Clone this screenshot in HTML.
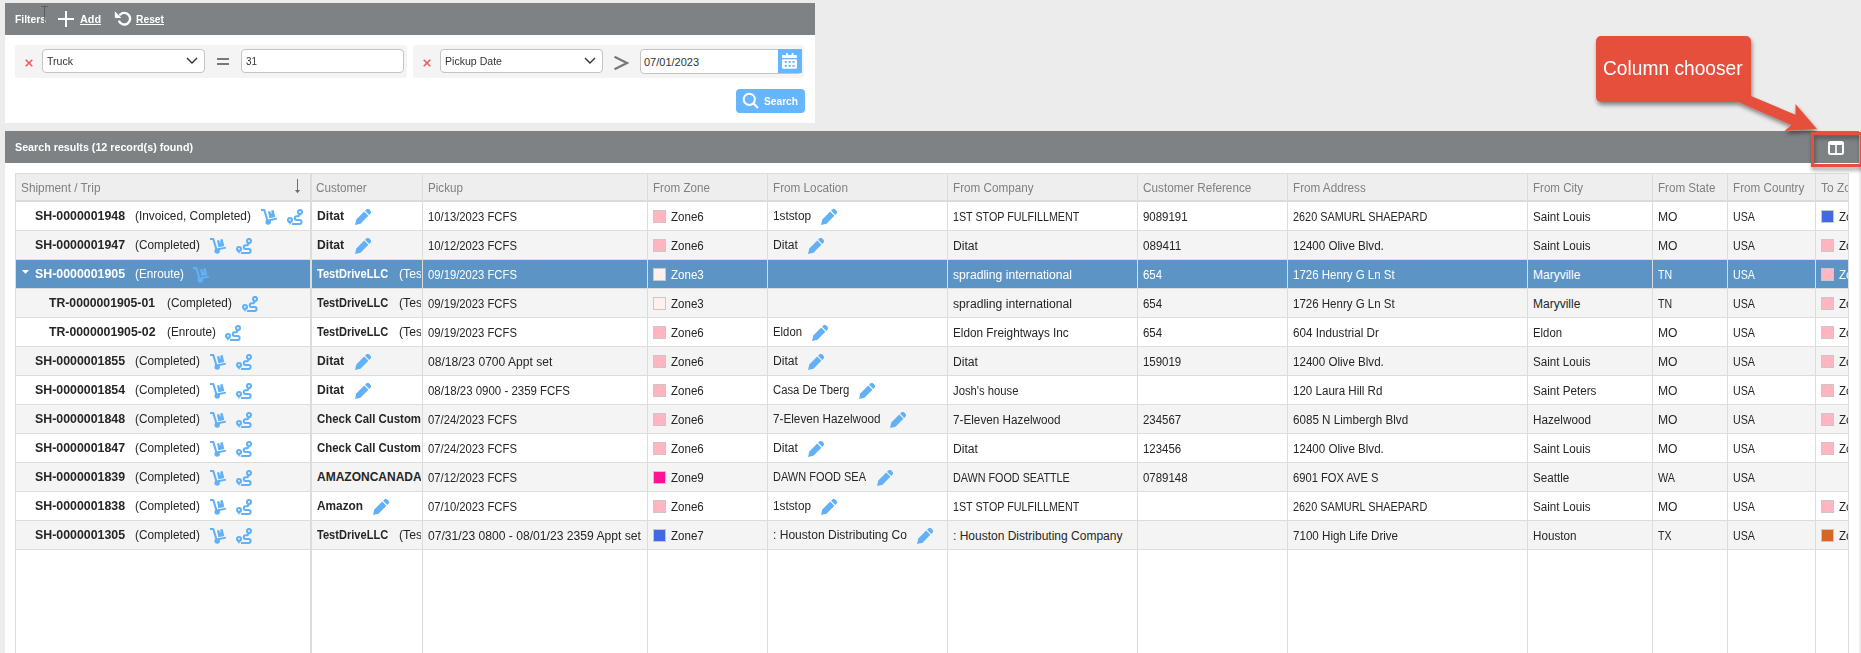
<!DOCTYPE html><html><head><meta charset="utf-8"><style>
*{box-sizing:border-box;margin:0;padding:0}
html,body{width:1861px;height:653px;overflow:hidden;background:#ececec;font-family:"Liberation Sans",sans-serif;position:relative}
.a{position:absolute}
svg{display:block}
.t{position:absolute;white-space:nowrap;font-size:12px;line-height:14px;color:#333;transform-origin:0 0}
.sw{position:absolute;width:13px;height:13px;border:1px solid #c8c8c8}
.cell{position:absolute;overflow:hidden;height:28px}
</style></head><body>

<div class="a" style="left:5px;top:3px;width:810px;height:120px;background:#fff"></div>
<div class="a" style="left:5px;top:3px;width:810px;height:32px;background:#7e8285"></div>
<div class="t" style="left:15px;top:12px;color:#fff;font-weight:bold;font-size:11px;transform:scaleX(0.9391);">Filters</div>
<div class="a" style="left:44px;top:6px;width:1px;height:17px;background:#4a4a4a;opacity:.7"></div><div class="a" style="left:41px;top:6px;width:7px;height:1px;background:#4a4a4a;opacity:.6"></div>
<div class="a" style="left:58px;top:18px;width:16px;height:2px;background:#fff"></div><div class="a" style="left:65px;top:11px;width:2px;height:16px;background:#fff"></div>
<div class="t" style="left:80px;top:12px;color:#fff;font-weight:bold;font-size:11px;transform:scaleX(0.9821);text-decoration:underline">Add</div>
<svg class="a" style="left:114px;top:10px" width="18" height="18" viewBox="0 0 18 18"><path d="M6.2 4.6 A5.8 5.8 0 1 1 5.3 11.6" fill="none" stroke="#fff" stroke-width="2.4" stroke-linecap="round"/><path d="M0.8 1.2 L0.8 8 L7.4 8 Z" fill="#fff"/></svg>
<div class="t" style="left:136px;top:12px;color:#fff;font-weight:bold;font-size:11px;transform:scaleX(0.9346);text-decoration:underline">Reset</div>
<div class="a" style="left:15px;top:45px;width:392px;height:33px;background:#f4f4f4;border-radius:3px"></div>
<div class="a" style="left:413px;top:45px;width:391px;height:33px;background:#f4f4f4;border-radius:3px"></div>
<div class="a" style="left:25px;top:59px"><svg width="8" height="8" viewBox="0 0 8 8"><path d="M0.7 0.7 L7.3 7.3 M7.3 0.7 L0.7 7.3" stroke="#f25a5a" stroke-width="1.6"/></svg></div>
<div class="a" style="left:423px;top:59px"><svg width="8" height="8" viewBox="0 0 8 8"><path d="M0.7 0.7 L7.3 7.3 M7.3 0.7 L0.7 7.3" stroke="#f25a5a" stroke-width="1.6"/></svg></div>
<div class="a" style="left:42px;top:49px;width:163px;height:24px;background:#fff;border:1px solid #c4c4c4;border-radius:4px"></div>
<div class="t" style="left:47px;top:54px;color:#333;font-size:11px;transform:scaleX(0.9597);">Truck</div>
<div class="a" style="left:186px;top:57px"><svg width="12" height="8" viewBox="0 0 12 8"><path d="M1 1 L6 6 L11 1" fill="none" stroke="#333" stroke-width="1.4"/></svg></div>
<div class="a" style="left:217px;top:58px;width:12px;height:2px;background:#777"></div><div class="a" style="left:217px;top:63px;width:12px;height:2px;background:#777"></div>
<div class="a" style="left:241px;top:49px;width:163px;height:24px;background:#fff;border:1px solid #c4c4c4;border-radius:4px"></div>
<div class="t" style="left:246px;top:54px;color:#333;font-size:11px;transform:scaleX(0.8990);">31</div>
<div class="a" style="left:440px;top:49px;width:163px;height:24px;background:#fff;border:1px solid #c4c4c4;border-radius:4px"></div>
<div class="t" style="left:445px;top:54px;color:#333;font-size:11px;transform:scaleX(0.9611);">Pickup Date</div>
<div class="a" style="left:584px;top:57px"><svg width="12" height="8" viewBox="0 0 12 8"><path d="M1 1 L6 6 L11 1" fill="none" stroke="#333" stroke-width="1.4"/></svg></div>
<svg class="a" style="left:613px;top:55px" width="16" height="16" viewBox="0 0 16 16"><path d="M1.5 1.8 L14 8 L1.5 14.2" fill="none" stroke="#777" stroke-width="2.2"/></svg>
<div class="a" style="left:640px;top:49px;width:162px;height:25px;background:#fff;border:1px solid #c4c4c4;border-radius:4px"></div>
<div class="t" style="left:644px;top:55px;color:#333;font-size:11px;">07/01/2023</div>
<div class="a" style="left:778px;top:49px;width:24px;height:24px;background:#66b5ff"></div>
<svg class="a" style="left:782px;top:53px" width="16" height="16" viewBox="0 0 16 16"><rect x="0" y="2" width="15" height="3" rx="1" fill="#fff"/><rect x="0" y="6.2" width="15" height="9.6" rx="1.2" fill="#fff"/><rect x="4" y="0" width="2" height="3.5" rx="1" fill="#fff"/><rect x="9.6" y="0" width="2" height="3.5" rx="1" fill="#fff"/><g fill="#66b5ff"><rect x="2.7" y="8" width="2.1" height="1.9"/><rect x="6.6" y="8" width="2.1" height="1.9"/><rect x="10.5" y="8" width="2.1" height="1.9"/><rect x="2.7" y="11.9" width="2.1" height="1.9"/><rect x="6.6" y="11.9" width="2.1" height="1.9"/><rect x="10.5" y="11.9" width="2.1" height="1.9"/></g></svg>
<div class="a" style="left:736px;top:89px;width:69px;height:24px;background:#66b5ff;border-radius:4px"></div>
<svg class="a" style="left:742px;top:92px" width="18" height="18" viewBox="0 0 18 18"><circle cx="7.3" cy="7.3" r="5.6" fill="none" stroke="#fff" stroke-width="2"/><path d="M11.3 11.3 L16 16" stroke="#fff" stroke-width="2.2"/></svg>
<div class="t" style="left:764px;top:94px;color:#fff;font-weight:bold;font-size:11px;transform:scaleX(0.9267);">Search</div>
<div class="a" style="left:5px;top:131px;width:1854px;height:530px;background:#fff"></div>
<div class="a" style="left:5px;top:131px;width:1854px;height:32px;background:#7e8285"></div>
<div class="t" style="left:15px;top:140px;color:#fff;font-weight:bold;font-size:11px;transform:scaleX(0.9739);">Search results (12 record(s) found)</div>
<div class="a" style="left:15px;top:173px;width:1834px;height:487px;border:1px solid #dcdcdc;background:#fff;overflow:hidden">
<div class="a" style="left:0;top:0;width:2000px;height:26px;background:#eeeeee"></div>
<div class="a" style="left:0;top:26px;width:2000px;height:2px;background:#dcdcdc"></div>
<div class="a" style="left:0;top:28px;width:2000px;height:28px;background:#ffffff"></div>
<div class="a" style="left:0;top:56px;width:2000px;height:1px;background:#dcdcdc"></div>
<div class="a" style="left:0;top:57px;width:2000px;height:28px;background:#f4f4f4"></div>
<div class="a" style="left:0;top:85px;width:2000px;height:1px;background:#dcdcdc"></div>
<div class="a" style="left:0;top:86px;width:2000px;height:28px;background:#5d94c6"></div>
<div class="a" style="left:0;top:114px;width:2000px;height:1px;background:#dcdcdc"></div>
<div class="a" style="left:0;top:115px;width:2000px;height:28px;background:#f4f4f4"></div>
<div class="a" style="left:0;top:143px;width:2000px;height:1px;background:#dcdcdc"></div>
<div class="a" style="left:0;top:144px;width:2000px;height:28px;background:#ffffff"></div>
<div class="a" style="left:0;top:172px;width:2000px;height:1px;background:#dcdcdc"></div>
<div class="a" style="left:0;top:173px;width:2000px;height:28px;background:#f4f4f4"></div>
<div class="a" style="left:0;top:201px;width:2000px;height:1px;background:#dcdcdc"></div>
<div class="a" style="left:0;top:202px;width:2000px;height:28px;background:#ffffff"></div>
<div class="a" style="left:0;top:230px;width:2000px;height:1px;background:#dcdcdc"></div>
<div class="a" style="left:0;top:231px;width:2000px;height:28px;background:#f4f4f4"></div>
<div class="a" style="left:0;top:259px;width:2000px;height:1px;background:#dcdcdc"></div>
<div class="a" style="left:0;top:260px;width:2000px;height:28px;background:#ffffff"></div>
<div class="a" style="left:0;top:288px;width:2000px;height:1px;background:#dcdcdc"></div>
<div class="a" style="left:0;top:289px;width:2000px;height:28px;background:#f4f4f4"></div>
<div class="a" style="left:0;top:317px;width:2000px;height:1px;background:#dcdcdc"></div>
<div class="a" style="left:0;top:318px;width:2000px;height:28px;background:#ffffff"></div>
<div class="a" style="left:0;top:346px;width:2000px;height:1px;background:#dcdcdc"></div>
<div class="a" style="left:0;top:347px;width:2000px;height:28px;background:#f4f4f4"></div>
<div class="a" style="left:0;top:375px;width:2000px;height:1px;background:#dcdcdc"></div>
<div class="a" style="left:294px;top:0;width:2px;height:600px;background:#dcdcdc"></div>
<div class="a" style="left:406px;top:0;width:1px;height:600px;background:#dcdcdc"></div>
<div class="a" style="left:631px;top:0;width:1px;height:600px;background:#dcdcdc"></div>
<div class="a" style="left:751px;top:0;width:1px;height:600px;background:#dcdcdc"></div>
<div class="a" style="left:931px;top:0;width:1px;height:600px;background:#dcdcdc"></div>
<div class="a" style="left:1121px;top:0;width:1px;height:600px;background:#dcdcdc"></div>
<div class="a" style="left:1271px;top:0;width:1px;height:600px;background:#dcdcdc"></div>
<div class="a" style="left:1511px;top:0;width:1px;height:600px;background:#dcdcdc"></div>
<div class="a" style="left:1636px;top:0;width:1px;height:600px;background:#dcdcdc"></div>
<div class="a" style="left:1711px;top:0;width:1px;height:600px;background:#dcdcdc"></div>
<div class="a" style="left:1799px;top:0;width:1px;height:600px;background:#dcdcdc"></div>
<div class="t" style="left:5px;top:7px;color:#808080;transform:scaleX(0.9852);">Shipment / Trip</div>
<div class="t" style="left:300px;top:7px;color:#808080;transform:scaleX(0.9748);">Customer</div>
<div class="t" style="left:412px;top:7px;color:#808080;transform:scaleX(0.9684);">Pickup</div>
<div class="t" style="left:637px;top:7px;color:#808080;transform:scaleX(0.9698);">From Zone</div>
<div class="t" style="left:757px;top:7px;color:#808080;transform:scaleX(0.9765);">From Location</div>
<div class="t" style="left:937px;top:7px;color:#808080;transform:scaleX(0.9750);">From Company</div>
<div class="t" style="left:1127px;top:7px;color:#808080;transform:scaleX(0.9784);">Customer Reference</div>
<div class="t" style="left:1277px;top:7px;color:#808080;transform:scaleX(0.9741);">From Address</div>
<div class="t" style="left:1517px;top:7px;color:#808080;transform:scaleX(0.9638);">From City</div>
<div class="t" style="left:1642px;top:7px;color:#808080;transform:scaleX(0.9688);">From State</div>
<div class="t" style="left:1717px;top:7px;color:#808080;transform:scaleX(0.9726);">From Country</div>
<div class="t" style="left:1805px;top:7px;color:#808080;transform:scaleX(0.9918);">To Zone</div>
<svg class="a" style="left:277px;top:4px" width="9" height="16" viewBox="0 0 9 16"><path d="M4.5 1 V12.5" stroke="#6f6f6f" stroke-width="1"/><path d="M1.9 12 H7.1 L4.5 15.3 Z" fill="#6f6f6f"/></svg>
<div class="t" style="left:19px;top:35px;color:#262626;font-weight:bold;transform:scaleX(1.0297);">SH-0000001948</div>
<div class="t" style="left:119px;top:35px;color:#262626;transform:scaleX(0.9867);">(Invoiced, Completed)</div>
<div class="a" style="left:245px;top:35px;width:16px;height:16px"><svg width="16" height="16" viewBox="0 0 16 16"><g fill="none" stroke="#62b1f6" stroke-width="2.1" stroke-linejoin="round"><path d="M0 1.05 H3.3 L6.6 12"/><path d="M8 11.3 L15.9 9.6" stroke-width="1.9"/></g><g fill="#62b1f6"><circle cx="7.2" cy="13.1" r="2.75"/><path d="M7.0 2.5 L9.2 2.0 L9.9 4.6 L10.6 4.4 L10.3 1.5 L12.6 0.9 L14.3 7.9 L8.4 9.3 Z"/></g></svg></div>
<div class="a" style="left:271px;top:35px;width:16px;height:16px"><svg width="16" height="16" viewBox="0 0 16 16"><g fill="none" stroke="#62b1f6" stroke-width="2.1" stroke-linecap="round" stroke-linejoin="round"><circle cx="13" cy="3" r="2"/><circle cx="3" cy="11" r="2"/><path d="M12 6.6 L11.4 7.2 H9.4 C7.3 7.2 7.3 11 9.4 11 H12.6 C15.3 11 15.3 15 12.6 15 H5.8"/></g><path d="M0.9 11.8 L3 16 L5.1 11.8 Z" fill="#62b1f6"/><path d="M10.9 4.2 L12.4 7.6 L15 4.6 Z" fill="#62b1f6"/></svg></div>
<div class="cell" style="left:296px;top:28px;width:109px">
<div class="t" style="left:5px;top:7px;color:#262626;font-weight:bold;transform:scaleX(1.0125);">Ditat</div>
</div>
<div class="a" style="left:339px;top:35px;width:16px;height:16px"><svg width="16" height="16" viewBox="0 0 16 16"><g fill="#62b1f6"><path d="M0 16 L1.3 10.5 L9.2 2.6 L13.4 6.8 L5.5 14.7 Z"/><path d="M10.1 1.7 L11.2 0.6 C12.2 -0.4 13.5 -0.3 14.6 0.8 L15.2 1.4 C16.3 2.5 16.4 3.8 15.4 4.8 L14.3 5.9 Z"/></g></svg></div>
<div class="t" style="left:412px;top:36px;color:#262626;transform:scaleX(0.9384);">10/13/2023 FCFS</div>
<div class="sw" style="left:637px;top:36px;background:#ffb6c1"></div>
<div class="t" style="left:655px;top:36px;color:#262626;transform:scaleX(0.9616);">Zone6</div>
<div class="t" style="left:757px;top:35px;color:#262626;transform:scaleX(0.9822);">1ststop</div>
<div class="a" style="left:805px;top:35px;width:16px;height:16px"><svg width="16" height="16" viewBox="0 0 16 16"><g fill="#62b1f6"><path d="M0 16 L1.3 10.5 L9.2 2.6 L13.4 6.8 L5.5 14.7 Z"/><path d="M10.1 1.7 L11.2 0.6 C12.2 -0.4 13.5 -0.3 14.6 0.8 L15.2 1.4 C16.3 2.5 16.4 3.8 15.4 4.8 L14.3 5.9 Z"/></g></svg></div>
<div class="t" style="left:937px;top:36px;color:#262626;transform:scaleX(0.8931);">1ST STOP FULFILLMENT</div>
<div class="t" style="left:1127px;top:36px;color:#262626;transform:scaleX(0.9550);">9089191</div>
<div class="t" style="left:1277px;top:36px;color:#262626;transform:scaleX(0.9067);">2620 SAMURL SHAEPARD</div>
<div class="t" style="left:1517px;top:36px;color:#262626;transform:scaleX(0.9701);">Saint Louis</div>
<div class="t" style="left:1642px;top:36px;color:#262626;transform:scaleX(1.0088);">MO</div>
<div class="t" style="left:1717px;top:36px;color:#262626;transform:scaleX(0.8916);">USA</div>
<div class="sw" style="left:1805px;top:36px;background:#4169e1"></div>
<div class="t" style="left:1823px;top:36px;color:#262626;transform:scaleX(0.9632);">Zone</div>
<div class="t" style="left:19px;top:64px;color:#262626;font-weight:bold;transform:scaleX(1.0297);">SH-0000001947</div>
<div class="t" style="left:119px;top:64px;color:#262626;transform:scaleX(0.9817);">(Completed)</div>
<div class="a" style="left:194px;top:64px;width:16px;height:16px"><svg width="16" height="16" viewBox="0 0 16 16"><g fill="none" stroke="#62b1f6" stroke-width="2.1" stroke-linejoin="round"><path d="M0 1.05 H3.3 L6.6 12"/><path d="M8 11.3 L15.9 9.6" stroke-width="1.9"/></g><g fill="#62b1f6"><circle cx="7.2" cy="13.1" r="2.75"/><path d="M7.0 2.5 L9.2 2.0 L9.9 4.6 L10.6 4.4 L10.3 1.5 L12.6 0.9 L14.3 7.9 L8.4 9.3 Z"/></g></svg></div>
<div class="a" style="left:220px;top:64px;width:16px;height:16px"><svg width="16" height="16" viewBox="0 0 16 16"><g fill="none" stroke="#62b1f6" stroke-width="2.1" stroke-linecap="round" stroke-linejoin="round"><circle cx="13" cy="3" r="2"/><circle cx="3" cy="11" r="2"/><path d="M12 6.6 L11.4 7.2 H9.4 C7.3 7.2 7.3 11 9.4 11 H12.6 C15.3 11 15.3 15 12.6 15 H5.8"/></g><path d="M0.9 11.8 L3 16 L5.1 11.8 Z" fill="#62b1f6"/><path d="M10.9 4.2 L12.4 7.6 L15 4.6 Z" fill="#62b1f6"/></svg></div>
<div class="cell" style="left:296px;top:57px;width:109px">
<div class="t" style="left:5px;top:7px;color:#262626;font-weight:bold;transform:scaleX(1.0125);">Ditat</div>
</div>
<div class="a" style="left:339px;top:64px;width:16px;height:16px"><svg width="16" height="16" viewBox="0 0 16 16"><g fill="#62b1f6"><path d="M0 16 L1.3 10.5 L9.2 2.6 L13.4 6.8 L5.5 14.7 Z"/><path d="M10.1 1.7 L11.2 0.6 C12.2 -0.4 13.5 -0.3 14.6 0.8 L15.2 1.4 C16.3 2.5 16.4 3.8 15.4 4.8 L14.3 5.9 Z"/></g></svg></div>
<div class="t" style="left:412px;top:65px;color:#262626;transform:scaleX(0.9384);">10/12/2023 FCFS</div>
<div class="sw" style="left:637px;top:65px;background:#ffb6c1"></div>
<div class="t" style="left:655px;top:65px;color:#262626;transform:scaleX(0.9616);">Zone6</div>
<div class="t" style="left:757px;top:64px;color:#262626;transform:scaleX(1.0132);">Ditat</div>
<div class="a" style="left:792px;top:64px;width:16px;height:16px"><svg width="16" height="16" viewBox="0 0 16 16"><g fill="#62b1f6"><path d="M0 16 L1.3 10.5 L9.2 2.6 L13.4 6.8 L5.5 14.7 Z"/><path d="M10.1 1.7 L11.2 0.6 C12.2 -0.4 13.5 -0.3 14.6 0.8 L15.2 1.4 C16.3 2.5 16.4 3.8 15.4 4.8 L14.3 5.9 Z"/></g></svg></div>
<div class="t" style="left:937px;top:65px;color:#262626;transform:scaleX(1.0132);">Ditat</div>
<div class="t" style="left:1127px;top:65px;color:#262626;transform:scaleX(0.9767);">089411</div>
<div class="t" style="left:1277px;top:65px;color:#262626;transform:scaleX(0.9655);">12400 Olive Blvd.</div>
<div class="t" style="left:1517px;top:65px;color:#262626;transform:scaleX(0.9701);">Saint Louis</div>
<div class="t" style="left:1642px;top:65px;color:#262626;transform:scaleX(1.0088);">MO</div>
<div class="t" style="left:1717px;top:65px;color:#262626;transform:scaleX(0.8916);">USA</div>
<div class="sw" style="left:1805px;top:65px;background:#ffb6c1"></div>
<div class="t" style="left:1823px;top:65px;color:#262626;transform:scaleX(0.9632);">Zone</div>
<svg class="a" style="left:6px;top:96px" width="7" height="4" viewBox="0 0 7 4"><path d="M0 0 H7 L3.5 4Z" fill="#fff"/></svg>
<div class="t" style="left:19px;top:93px;color:#fff;font-weight:bold;transform:scaleX(1.0297);">SH-0000001905</div>
<div class="t" style="left:119px;top:93px;color:#fff;transform:scaleX(0.9793);">(Enroute)</div>
<div class="a" style="left:177px;top:93px;width:16px;height:16px"><svg width="16" height="16" viewBox="0 0 16 16"><g fill="none" stroke="#62b1f6" stroke-width="2.1" stroke-linejoin="round"><path d="M0 1.05 H3.3 L6.6 12"/><path d="M8 11.3 L15.9 9.6" stroke-width="1.9"/></g><g fill="#62b1f6"><circle cx="7.2" cy="13.1" r="2.75"/><path d="M7.0 2.5 L9.2 2.0 L9.9 4.6 L10.6 4.4 L10.3 1.5 L12.6 0.9 L14.3 7.9 L8.4 9.3 Z"/></g></svg></div>
<div class="cell" style="left:296px;top:86px;width:109px">
<div class="t" style="left:5px;top:7px;color:#fff;font-weight:bold;transform:scaleX(0.9232);">TestDriveLLC</div>
<div class="t" style="left:86.5px;top:7px;color:#fff;transform:scaleX(1.0160);">(Test</div>
</div>
<div class="t" style="left:412px;top:94px;color:#fff;transform:scaleX(0.9384);">09/19/2023 FCFS</div>
<div class="sw" style="left:637px;top:94px;background:#fff0ec"></div>
<div class="t" style="left:655px;top:94px;color:#fff;transform:scaleX(0.9616);">Zone3</div>
<div class="t" style="left:937px;top:94px;color:#fff;transform:scaleX(1.0135);">spradling international</div>
<div class="t" style="left:1127px;top:94px;color:#fff;transform:scaleX(0.9550);">654</div>
<div class="t" style="left:1277px;top:94px;color:#fff;transform:scaleX(0.9588);">1726 Henry G Ln St</div>
<div class="t" style="left:1517px;top:94px;color:#fff;">Maryville</div>
<div class="t" style="left:1642px;top:94px;color:#fff;transform:scaleX(0.8790);">TN</div>
<div class="t" style="left:1717px;top:94px;color:#fff;transform:scaleX(0.8916);">USA</div>
<div class="sw" style="left:1805px;top:94px;background:#ffb6c1"></div>
<div class="t" style="left:1823px;top:94px;color:#fff;transform:scaleX(0.9632);">Zone</div>
<div class="t" style="left:33px;top:122px;color:#262626;font-weight:bold;transform:scaleX(1.0185);">TR-0000001905-01</div>
<div class="t" style="left:150.5px;top:122px;color:#262626;transform:scaleX(0.9817);">(Completed)</div>
<div class="a" style="left:226px;top:122px;width:16px;height:16px"><svg width="16" height="16" viewBox="0 0 16 16"><g fill="none" stroke="#62b1f6" stroke-width="2.1" stroke-linecap="round" stroke-linejoin="round"><circle cx="13" cy="3" r="2"/><circle cx="3" cy="11" r="2"/><path d="M12 6.6 L11.4 7.2 H9.4 C7.3 7.2 7.3 11 9.4 11 H12.6 C15.3 11 15.3 15 12.6 15 H5.8"/></g><path d="M0.9 11.8 L3 16 L5.1 11.8 Z" fill="#62b1f6"/><path d="M10.9 4.2 L12.4 7.6 L15 4.6 Z" fill="#62b1f6"/></svg></div>
<div class="cell" style="left:296px;top:115px;width:109px">
<div class="t" style="left:5px;top:7px;color:#262626;font-weight:bold;transform:scaleX(0.9232);">TestDriveLLC</div>
<div class="t" style="left:86.5px;top:7px;color:#262626;transform:scaleX(1.0160);">(Test</div>
</div>
<div class="t" style="left:412px;top:123px;color:#262626;transform:scaleX(0.9384);">09/19/2023 FCFS</div>
<div class="sw" style="left:637px;top:123px;background:#fff0ec"></div>
<div class="t" style="left:655px;top:123px;color:#262626;transform:scaleX(0.9616);">Zone3</div>
<div class="t" style="left:937px;top:123px;color:#262626;transform:scaleX(1.0135);">spradling international</div>
<div class="t" style="left:1127px;top:123px;color:#262626;transform:scaleX(0.9550);">654</div>
<div class="t" style="left:1277px;top:123px;color:#262626;transform:scaleX(0.9588);">1726 Henry G Ln St</div>
<div class="t" style="left:1517px;top:123px;color:#262626;">Maryville</div>
<div class="t" style="left:1642px;top:123px;color:#262626;transform:scaleX(0.8790);">TN</div>
<div class="t" style="left:1717px;top:123px;color:#262626;transform:scaleX(0.8916);">USA</div>
<div class="sw" style="left:1805px;top:123px;background:#ffb6c1"></div>
<div class="t" style="left:1823px;top:123px;color:#262626;transform:scaleX(0.9632);">Zone</div>
<div class="t" style="left:33px;top:151px;color:#262626;font-weight:bold;transform:scaleX(1.0233);">TR-0000001905-02</div>
<div class="t" style="left:150.5px;top:151px;color:#262626;transform:scaleX(0.9793);">(Enroute)</div>
<div class="a" style="left:209px;top:151px;width:16px;height:16px"><svg width="16" height="16" viewBox="0 0 16 16"><g fill="none" stroke="#62b1f6" stroke-width="2.1" stroke-linecap="round" stroke-linejoin="round"><circle cx="13" cy="3" r="2"/><circle cx="3" cy="11" r="2"/><path d="M12 6.6 L11.4 7.2 H9.4 C7.3 7.2 7.3 11 9.4 11 H12.6 C15.3 11 15.3 15 12.6 15 H5.8"/></g><path d="M0.9 11.8 L3 16 L5.1 11.8 Z" fill="#62b1f6"/><path d="M10.9 4.2 L12.4 7.6 L15 4.6 Z" fill="#62b1f6"/></svg></div>
<div class="cell" style="left:296px;top:144px;width:109px">
<div class="t" style="left:5px;top:7px;color:#262626;font-weight:bold;transform:scaleX(0.9232);">TestDriveLLC</div>
<div class="t" style="left:86.5px;top:7px;color:#262626;transform:scaleX(1.0160);">(Test</div>
</div>
<div class="t" style="left:412px;top:152px;color:#262626;transform:scaleX(0.9384);">09/19/2023 FCFS</div>
<div class="sw" style="left:637px;top:152px;background:#ffb6c1"></div>
<div class="t" style="left:655px;top:152px;color:#262626;transform:scaleX(0.9616);">Zone6</div>
<div class="t" style="left:757px;top:151px;color:#262626;transform:scaleX(0.9449);">Eldon</div>
<div class="a" style="left:796px;top:151px;width:16px;height:16px"><svg width="16" height="16" viewBox="0 0 16 16"><g fill="#62b1f6"><path d="M0 16 L1.3 10.5 L9.2 2.6 L13.4 6.8 L5.5 14.7 Z"/><path d="M10.1 1.7 L11.2 0.6 C12.2 -0.4 13.5 -0.3 14.6 0.8 L15.2 1.4 C16.3 2.5 16.4 3.8 15.4 4.8 L14.3 5.9 Z"/></g></svg></div>
<div class="t" style="left:937px;top:152px;color:#262626;transform:scaleX(0.9803);">Eldon Freightways Inc</div>
<div class="t" style="left:1127px;top:152px;color:#262626;transform:scaleX(0.9550);">654</div>
<div class="t" style="left:1277px;top:152px;color:#262626;transform:scaleX(0.9755);">604 Industrial Dr</div>
<div class="t" style="left:1517px;top:152px;color:#262626;transform:scaleX(0.9449);">Eldon</div>
<div class="t" style="left:1642px;top:152px;color:#262626;transform:scaleX(1.0088);">MO</div>
<div class="t" style="left:1717px;top:152px;color:#262626;transform:scaleX(0.8916);">USA</div>
<div class="sw" style="left:1805px;top:152px;background:#ffb6c1"></div>
<div class="t" style="left:1823px;top:152px;color:#262626;transform:scaleX(0.9632);">Zone</div>
<div class="t" style="left:19px;top:180px;color:#262626;font-weight:bold;transform:scaleX(1.0297);">SH-0000001855</div>
<div class="t" style="left:119px;top:180px;color:#262626;transform:scaleX(0.9817);">(Completed)</div>
<div class="a" style="left:194px;top:180px;width:16px;height:16px"><svg width="16" height="16" viewBox="0 0 16 16"><g fill="none" stroke="#62b1f6" stroke-width="2.1" stroke-linejoin="round"><path d="M0 1.05 H3.3 L6.6 12"/><path d="M8 11.3 L15.9 9.6" stroke-width="1.9"/></g><g fill="#62b1f6"><circle cx="7.2" cy="13.1" r="2.75"/><path d="M7.0 2.5 L9.2 2.0 L9.9 4.6 L10.6 4.4 L10.3 1.5 L12.6 0.9 L14.3 7.9 L8.4 9.3 Z"/></g></svg></div>
<div class="a" style="left:220px;top:180px;width:16px;height:16px"><svg width="16" height="16" viewBox="0 0 16 16"><g fill="none" stroke="#62b1f6" stroke-width="2.1" stroke-linecap="round" stroke-linejoin="round"><circle cx="13" cy="3" r="2"/><circle cx="3" cy="11" r="2"/><path d="M12 6.6 L11.4 7.2 H9.4 C7.3 7.2 7.3 11 9.4 11 H12.6 C15.3 11 15.3 15 12.6 15 H5.8"/></g><path d="M0.9 11.8 L3 16 L5.1 11.8 Z" fill="#62b1f6"/><path d="M10.9 4.2 L12.4 7.6 L15 4.6 Z" fill="#62b1f6"/></svg></div>
<div class="cell" style="left:296px;top:173px;width:109px">
<div class="t" style="left:5px;top:7px;color:#262626;font-weight:bold;transform:scaleX(1.0125);">Ditat</div>
</div>
<div class="a" style="left:339px;top:180px;width:16px;height:16px"><svg width="16" height="16" viewBox="0 0 16 16"><g fill="#62b1f6"><path d="M0 16 L1.3 10.5 L9.2 2.6 L13.4 6.8 L5.5 14.7 Z"/><path d="M10.1 1.7 L11.2 0.6 C12.2 -0.4 13.5 -0.3 14.6 0.8 L15.2 1.4 C16.3 2.5 16.4 3.8 15.4 4.8 L14.3 5.9 Z"/></g></svg></div>
<div class="t" style="left:412px;top:181px;color:#262626;transform:scaleX(1.0072);">08/18/23 0700 Appt set</div>
<div class="sw" style="left:637px;top:181px;background:#ffb6c1"></div>
<div class="t" style="left:655px;top:181px;color:#262626;transform:scaleX(0.9616);">Zone6</div>
<div class="t" style="left:757px;top:180px;color:#262626;transform:scaleX(1.0132);">Ditat</div>
<div class="a" style="left:792px;top:180px;width:16px;height:16px"><svg width="16" height="16" viewBox="0 0 16 16"><g fill="#62b1f6"><path d="M0 16 L1.3 10.5 L9.2 2.6 L13.4 6.8 L5.5 14.7 Z"/><path d="M10.1 1.7 L11.2 0.6 C12.2 -0.4 13.5 -0.3 14.6 0.8 L15.2 1.4 C16.3 2.5 16.4 3.8 15.4 4.8 L14.3 5.9 Z"/></g></svg></div>
<div class="t" style="left:937px;top:181px;color:#262626;transform:scaleX(1.0132);">Ditat</div>
<div class="t" style="left:1127px;top:181px;color:#262626;transform:scaleX(0.9550);">159019</div>
<div class="t" style="left:1277px;top:181px;color:#262626;transform:scaleX(0.9655);">12400 Olive Blvd.</div>
<div class="t" style="left:1517px;top:181px;color:#262626;transform:scaleX(0.9701);">Saint Louis</div>
<div class="t" style="left:1642px;top:181px;color:#262626;transform:scaleX(1.0088);">MO</div>
<div class="t" style="left:1717px;top:181px;color:#262626;transform:scaleX(0.8916);">USA</div>
<div class="sw" style="left:1805px;top:181px;background:#ffb6c1"></div>
<div class="t" style="left:1823px;top:181px;color:#262626;transform:scaleX(0.9632);">Zone</div>
<div class="t" style="left:19px;top:209px;color:#262626;font-weight:bold;transform:scaleX(1.0297);">SH-0000001854</div>
<div class="t" style="left:119px;top:209px;color:#262626;transform:scaleX(0.9817);">(Completed)</div>
<div class="a" style="left:194px;top:209px;width:16px;height:16px"><svg width="16" height="16" viewBox="0 0 16 16"><g fill="none" stroke="#62b1f6" stroke-width="2.1" stroke-linejoin="round"><path d="M0 1.05 H3.3 L6.6 12"/><path d="M8 11.3 L15.9 9.6" stroke-width="1.9"/></g><g fill="#62b1f6"><circle cx="7.2" cy="13.1" r="2.75"/><path d="M7.0 2.5 L9.2 2.0 L9.9 4.6 L10.6 4.4 L10.3 1.5 L12.6 0.9 L14.3 7.9 L8.4 9.3 Z"/></g></svg></div>
<div class="a" style="left:220px;top:209px;width:16px;height:16px"><svg width="16" height="16" viewBox="0 0 16 16"><g fill="none" stroke="#62b1f6" stroke-width="2.1" stroke-linecap="round" stroke-linejoin="round"><circle cx="13" cy="3" r="2"/><circle cx="3" cy="11" r="2"/><path d="M12 6.6 L11.4 7.2 H9.4 C7.3 7.2 7.3 11 9.4 11 H12.6 C15.3 11 15.3 15 12.6 15 H5.8"/></g><path d="M0.9 11.8 L3 16 L5.1 11.8 Z" fill="#62b1f6"/><path d="M10.9 4.2 L12.4 7.6 L15 4.6 Z" fill="#62b1f6"/></svg></div>
<div class="cell" style="left:296px;top:202px;width:109px">
<div class="t" style="left:5px;top:7px;color:#262626;font-weight:bold;transform:scaleX(1.0125);">Ditat</div>
</div>
<div class="a" style="left:339px;top:209px;width:16px;height:16px"><svg width="16" height="16" viewBox="0 0 16 16"><g fill="#62b1f6"><path d="M0 16 L1.3 10.5 L9.2 2.6 L13.4 6.8 L5.5 14.7 Z"/><path d="M10.1 1.7 L11.2 0.6 C12.2 -0.4 13.5 -0.3 14.6 0.8 L15.2 1.4 C16.3 2.5 16.4 3.8 15.4 4.8 L14.3 5.9 Z"/></g></svg></div>
<div class="t" style="left:412px;top:210px;color:#262626;transform:scaleX(0.9541);">08/18/23 0900 - 2359 FCFS</div>
<div class="sw" style="left:637px;top:210px;background:#ffb6c1"></div>
<div class="t" style="left:655px;top:210px;color:#262626;transform:scaleX(0.9616);">Zone6</div>
<div class="t" style="left:757px;top:209px;color:#262626;transform:scaleX(0.9402);">Casa De Tberg</div>
<div class="a" style="left:843px;top:209px;width:16px;height:16px"><svg width="16" height="16" viewBox="0 0 16 16"><g fill="#62b1f6"><path d="M0 16 L1.3 10.5 L9.2 2.6 L13.4 6.8 L5.5 14.7 Z"/><path d="M10.1 1.7 L11.2 0.6 C12.2 -0.4 13.5 -0.3 14.6 0.8 L15.2 1.4 C16.3 2.5 16.4 3.8 15.4 4.8 L14.3 5.9 Z"/></g></svg></div>
<div class="t" style="left:937px;top:210px;color:#262626;transform:scaleX(0.9402);">Josh's house</div>

<div class="t" style="left:1277px;top:210px;color:#262626;transform:scaleX(0.9644);">120 Laura Hill Rd</div>
<div class="t" style="left:1517px;top:210px;color:#262626;transform:scaleX(0.9699);">Saint Peters</div>
<div class="t" style="left:1642px;top:210px;color:#262626;transform:scaleX(1.0088);">MO</div>
<div class="t" style="left:1717px;top:210px;color:#262626;transform:scaleX(0.8916);">USA</div>
<div class="sw" style="left:1805px;top:210px;background:#ffb6c1"></div>
<div class="t" style="left:1823px;top:210px;color:#262626;transform:scaleX(0.9632);">Zone</div>
<div class="t" style="left:19px;top:238px;color:#262626;font-weight:bold;transform:scaleX(1.0297);">SH-0000001848</div>
<div class="t" style="left:119px;top:238px;color:#262626;transform:scaleX(0.9817);">(Completed)</div>
<div class="a" style="left:194px;top:238px;width:16px;height:16px"><svg width="16" height="16" viewBox="0 0 16 16"><g fill="none" stroke="#62b1f6" stroke-width="2.1" stroke-linejoin="round"><path d="M0 1.05 H3.3 L6.6 12"/><path d="M8 11.3 L15.9 9.6" stroke-width="1.9"/></g><g fill="#62b1f6"><circle cx="7.2" cy="13.1" r="2.75"/><path d="M7.0 2.5 L9.2 2.0 L9.9 4.6 L10.6 4.4 L10.3 1.5 L12.6 0.9 L14.3 7.9 L8.4 9.3 Z"/></g></svg></div>
<div class="a" style="left:220px;top:238px;width:16px;height:16px"><svg width="16" height="16" viewBox="0 0 16 16"><g fill="none" stroke="#62b1f6" stroke-width="2.1" stroke-linecap="round" stroke-linejoin="round"><circle cx="13" cy="3" r="2"/><circle cx="3" cy="11" r="2"/><path d="M12 6.6 L11.4 7.2 H9.4 C7.3 7.2 7.3 11 9.4 11 H12.6 C15.3 11 15.3 15 12.6 15 H5.8"/></g><path d="M0.9 11.8 L3 16 L5.1 11.8 Z" fill="#62b1f6"/><path d="M10.9 4.2 L12.4 7.6 L15 4.6 Z" fill="#62b1f6"/></svg></div>
<div class="cell" style="left:296px;top:231px;width:109px">
<div class="t" style="left:5px;top:7px;color:#262626;font-weight:bold;transform:scaleX(0.9511);">Check Call Customer</div>
</div>
<div class="t" style="left:412px;top:239px;color:#262626;transform:scaleX(0.9384);">07/24/2023 FCFS</div>
<div class="sw" style="left:637px;top:239px;background:#ffb6c1"></div>
<div class="t" style="left:655px;top:239px;color:#262626;transform:scaleX(0.9616);">Zone6</div>
<div class="t" style="left:757px;top:238px;color:#262626;transform:scaleX(0.9775);">7-Eleven Hazelwood</div>
<div class="a" style="left:873.5px;top:238px;width:16px;height:16px"><svg width="16" height="16" viewBox="0 0 16 16"><g fill="#62b1f6"><path d="M0 16 L1.3 10.5 L9.2 2.6 L13.4 6.8 L5.5 14.7 Z"/><path d="M10.1 1.7 L11.2 0.6 C12.2 -0.4 13.5 -0.3 14.6 0.8 L15.2 1.4 C16.3 2.5 16.4 3.8 15.4 4.8 L14.3 5.9 Z"/></g></svg></div>
<div class="t" style="left:937px;top:239px;color:#262626;transform:scaleX(0.9775);">7-Eleven Hazelwood</div>
<div class="t" style="left:1127px;top:239px;color:#262626;transform:scaleX(0.9550);">234567</div>
<div class="t" style="left:1277px;top:239px;color:#262626;transform:scaleX(0.9694);">6085 N Limbergh Blvd</div>
<div class="t" style="left:1517px;top:239px;color:#262626;transform:scaleX(0.9772);">Hazelwood</div>
<div class="t" style="left:1642px;top:239px;color:#262626;transform:scaleX(1.0088);">MO</div>
<div class="t" style="left:1717px;top:239px;color:#262626;transform:scaleX(0.8916);">USA</div>
<div class="sw" style="left:1805px;top:239px;background:#ffb6c1"></div>
<div class="t" style="left:1823px;top:239px;color:#262626;transform:scaleX(0.9632);">Zone</div>
<div class="t" style="left:19px;top:267px;color:#262626;font-weight:bold;transform:scaleX(1.0297);">SH-0000001847</div>
<div class="t" style="left:119px;top:267px;color:#262626;transform:scaleX(0.9817);">(Completed)</div>
<div class="a" style="left:194px;top:267px;width:16px;height:16px"><svg width="16" height="16" viewBox="0 0 16 16"><g fill="none" stroke="#62b1f6" stroke-width="2.1" stroke-linejoin="round"><path d="M0 1.05 H3.3 L6.6 12"/><path d="M8 11.3 L15.9 9.6" stroke-width="1.9"/></g><g fill="#62b1f6"><circle cx="7.2" cy="13.1" r="2.75"/><path d="M7.0 2.5 L9.2 2.0 L9.9 4.6 L10.6 4.4 L10.3 1.5 L12.6 0.9 L14.3 7.9 L8.4 9.3 Z"/></g></svg></div>
<div class="a" style="left:220px;top:267px;width:16px;height:16px"><svg width="16" height="16" viewBox="0 0 16 16"><g fill="none" stroke="#62b1f6" stroke-width="2.1" stroke-linecap="round" stroke-linejoin="round"><circle cx="13" cy="3" r="2"/><circle cx="3" cy="11" r="2"/><path d="M12 6.6 L11.4 7.2 H9.4 C7.3 7.2 7.3 11 9.4 11 H12.6 C15.3 11 15.3 15 12.6 15 H5.8"/></g><path d="M0.9 11.8 L3 16 L5.1 11.8 Z" fill="#62b1f6"/><path d="M10.9 4.2 L12.4 7.6 L15 4.6 Z" fill="#62b1f6"/></svg></div>
<div class="cell" style="left:296px;top:260px;width:109px">
<div class="t" style="left:5px;top:7px;color:#262626;font-weight:bold;transform:scaleX(0.9511);">Check Call Customer</div>
</div>
<div class="t" style="left:412px;top:268px;color:#262626;transform:scaleX(0.9384);">07/24/2023 FCFS</div>
<div class="sw" style="left:637px;top:268px;background:#ffb6c1"></div>
<div class="t" style="left:655px;top:268px;color:#262626;transform:scaleX(0.9616);">Zone6</div>
<div class="t" style="left:757px;top:267px;color:#262626;transform:scaleX(1.0132);">Ditat</div>
<div class="a" style="left:792px;top:267px;width:16px;height:16px"><svg width="16" height="16" viewBox="0 0 16 16"><g fill="#62b1f6"><path d="M0 16 L1.3 10.5 L9.2 2.6 L13.4 6.8 L5.5 14.7 Z"/><path d="M10.1 1.7 L11.2 0.6 C12.2 -0.4 13.5 -0.3 14.6 0.8 L15.2 1.4 C16.3 2.5 16.4 3.8 15.4 4.8 L14.3 5.9 Z"/></g></svg></div>
<div class="t" style="left:937px;top:268px;color:#262626;transform:scaleX(1.0132);">Ditat</div>
<div class="t" style="left:1127px;top:268px;color:#262626;transform:scaleX(0.9550);">123456</div>
<div class="t" style="left:1277px;top:268px;color:#262626;transform:scaleX(0.9655);">12400 Olive Blvd.</div>
<div class="t" style="left:1517px;top:268px;color:#262626;transform:scaleX(0.9701);">Saint Louis</div>
<div class="t" style="left:1642px;top:268px;color:#262626;transform:scaleX(1.0088);">MO</div>
<div class="t" style="left:1717px;top:268px;color:#262626;transform:scaleX(0.8916);">USA</div>
<div class="sw" style="left:1805px;top:268px;background:#ffb6c1"></div>
<div class="t" style="left:1823px;top:268px;color:#262626;transform:scaleX(0.9632);">Zone</div>
<div class="t" style="left:19px;top:296px;color:#262626;font-weight:bold;transform:scaleX(1.0297);">SH-0000001839</div>
<div class="t" style="left:119px;top:296px;color:#262626;transform:scaleX(0.9817);">(Completed)</div>
<div class="a" style="left:194px;top:296px;width:16px;height:16px"><svg width="16" height="16" viewBox="0 0 16 16"><g fill="none" stroke="#62b1f6" stroke-width="2.1" stroke-linejoin="round"><path d="M0 1.05 H3.3 L6.6 12"/><path d="M8 11.3 L15.9 9.6" stroke-width="1.9"/></g><g fill="#62b1f6"><circle cx="7.2" cy="13.1" r="2.75"/><path d="M7.0 2.5 L9.2 2.0 L9.9 4.6 L10.6 4.4 L10.3 1.5 L12.6 0.9 L14.3 7.9 L8.4 9.3 Z"/></g></svg></div>
<div class="a" style="left:220px;top:296px;width:16px;height:16px"><svg width="16" height="16" viewBox="0 0 16 16"><g fill="none" stroke="#62b1f6" stroke-width="2.1" stroke-linecap="round" stroke-linejoin="round"><circle cx="13" cy="3" r="2"/><circle cx="3" cy="11" r="2"/><path d="M12 6.6 L11.4 7.2 H9.4 C7.3 7.2 7.3 11 9.4 11 H12.6 C15.3 11 15.3 15 12.6 15 H5.8"/></g><path d="M0.9 11.8 L3 16 L5.1 11.8 Z" fill="#62b1f6"/><path d="M10.9 4.2 L12.4 7.6 L15 4.6 Z" fill="#62b1f6"/></svg></div>
<div class="cell" style="left:296px;top:289px;width:109px">
<div class="t" style="left:5px;top:7px;color:#262626;font-weight:bold;">AMAZONCANADA</div>
</div>
<div class="t" style="left:412px;top:297px;color:#262626;transform:scaleX(0.9384);">07/12/2023 FCFS</div>
<div class="sw" style="left:637px;top:297px;background:#ff1493"></div>
<div class="t" style="left:655px;top:297px;color:#262626;transform:scaleX(0.9616);">Zone9</div>
<div class="t" style="left:757px;top:296px;color:#262626;transform:scaleX(0.9157);">DAWN FOOD SEA</div>
<div class="a" style="left:860.5px;top:296px;width:16px;height:16px"><svg width="16" height="16" viewBox="0 0 16 16"><g fill="#62b1f6"><path d="M0 16 L1.3 10.5 L9.2 2.6 L13.4 6.8 L5.5 14.7 Z"/><path d="M10.1 1.7 L11.2 0.6 C12.2 -0.4 13.5 -0.3 14.6 0.8 L15.2 1.4 C16.3 2.5 16.4 3.8 15.4 4.8 L14.3 5.9 Z"/></g></svg></div>
<div class="t" style="left:937px;top:297px;color:#262626;transform:scaleX(0.8980);">DAWN FOOD SEATTLE</div>
<div class="t" style="left:1127px;top:297px;color:#262626;transform:scaleX(0.9550);">0789148</div>
<div class="t" style="left:1277px;top:297px;color:#262626;transform:scaleX(0.9305);">6901 FOX AVE S</div>
<div class="t" style="left:1517px;top:297px;color:#262626;transform:scaleX(0.9694);">Seattle</div>
<div class="t" style="left:1642px;top:297px;color:#262626;transform:scaleX(0.8997);">WA</div>
<div class="t" style="left:1717px;top:297px;color:#262626;transform:scaleX(0.8916);">USA</div>
<div class="t" style="left:19px;top:325px;color:#262626;font-weight:bold;transform:scaleX(1.0297);">SH-0000001838</div>
<div class="t" style="left:119px;top:325px;color:#262626;transform:scaleX(0.9817);">(Completed)</div>
<div class="a" style="left:194px;top:325px;width:16px;height:16px"><svg width="16" height="16" viewBox="0 0 16 16"><g fill="none" stroke="#62b1f6" stroke-width="2.1" stroke-linejoin="round"><path d="M0 1.05 H3.3 L6.6 12"/><path d="M8 11.3 L15.9 9.6" stroke-width="1.9"/></g><g fill="#62b1f6"><circle cx="7.2" cy="13.1" r="2.75"/><path d="M7.0 2.5 L9.2 2.0 L9.9 4.6 L10.6 4.4 L10.3 1.5 L12.6 0.9 L14.3 7.9 L8.4 9.3 Z"/></g></svg></div>
<div class="a" style="left:220px;top:325px;width:16px;height:16px"><svg width="16" height="16" viewBox="0 0 16 16"><g fill="none" stroke="#62b1f6" stroke-width="2.1" stroke-linecap="round" stroke-linejoin="round"><circle cx="13" cy="3" r="2"/><circle cx="3" cy="11" r="2"/><path d="M12 6.6 L11.4 7.2 H9.4 C7.3 7.2 7.3 11 9.4 11 H12.6 C15.3 11 15.3 15 12.6 15 H5.8"/></g><path d="M0.9 11.8 L3 16 L5.1 11.8 Z" fill="#62b1f6"/><path d="M10.9 4.2 L12.4 7.6 L15 4.6 Z" fill="#62b1f6"/></svg></div>
<div class="cell" style="left:296px;top:318px;width:109px">
<div class="t" style="left:5px;top:7px;color:#262626;font-weight:bold;transform:scaleX(0.9856);">Amazon</div>
</div>
<div class="a" style="left:357px;top:325px;width:16px;height:16px"><svg width="16" height="16" viewBox="0 0 16 16"><g fill="#62b1f6"><path d="M0 16 L1.3 10.5 L9.2 2.6 L13.4 6.8 L5.5 14.7 Z"/><path d="M10.1 1.7 L11.2 0.6 C12.2 -0.4 13.5 -0.3 14.6 0.8 L15.2 1.4 C16.3 2.5 16.4 3.8 15.4 4.8 L14.3 5.9 Z"/></g></svg></div>
<div class="t" style="left:412px;top:326px;color:#262626;transform:scaleX(0.9384);">07/10/2023 FCFS</div>
<div class="sw" style="left:637px;top:326px;background:#ffb6c1"></div>
<div class="t" style="left:655px;top:326px;color:#262626;transform:scaleX(0.9616);">Zone6</div>
<div class="t" style="left:757px;top:325px;color:#262626;transform:scaleX(0.9822);">1ststop</div>
<div class="a" style="left:805px;top:325px;width:16px;height:16px"><svg width="16" height="16" viewBox="0 0 16 16"><g fill="#62b1f6"><path d="M0 16 L1.3 10.5 L9.2 2.6 L13.4 6.8 L5.5 14.7 Z"/><path d="M10.1 1.7 L11.2 0.6 C12.2 -0.4 13.5 -0.3 14.6 0.8 L15.2 1.4 C16.3 2.5 16.4 3.8 15.4 4.8 L14.3 5.9 Z"/></g></svg></div>
<div class="t" style="left:937px;top:326px;color:#262626;transform:scaleX(0.8931);">1ST STOP FULFILLMENT</div>

<div class="t" style="left:1277px;top:326px;color:#262626;transform:scaleX(0.9067);">2620 SAMURL SHAEPARD</div>
<div class="t" style="left:1517px;top:326px;color:#262626;transform:scaleX(0.9701);">Saint Louis</div>
<div class="t" style="left:1642px;top:326px;color:#262626;transform:scaleX(1.0088);">MO</div>
<div class="t" style="left:1717px;top:326px;color:#262626;transform:scaleX(0.8916);">USA</div>
<div class="sw" style="left:1805px;top:326px;background:#ffb6c1"></div>
<div class="t" style="left:1823px;top:326px;color:#262626;transform:scaleX(0.9632);">Zone</div>
<div class="t" style="left:19px;top:354px;color:#262626;font-weight:bold;transform:scaleX(1.0297);">SH-0000001305</div>
<div class="t" style="left:119px;top:354px;color:#262626;transform:scaleX(0.9817);">(Completed)</div>
<div class="a" style="left:194px;top:354px;width:16px;height:16px"><svg width="16" height="16" viewBox="0 0 16 16"><g fill="none" stroke="#62b1f6" stroke-width="2.1" stroke-linejoin="round"><path d="M0 1.05 H3.3 L6.6 12"/><path d="M8 11.3 L15.9 9.6" stroke-width="1.9"/></g><g fill="#62b1f6"><circle cx="7.2" cy="13.1" r="2.75"/><path d="M7.0 2.5 L9.2 2.0 L9.9 4.6 L10.6 4.4 L10.3 1.5 L12.6 0.9 L14.3 7.9 L8.4 9.3 Z"/></g></svg></div>
<div class="a" style="left:220px;top:354px;width:16px;height:16px"><svg width="16" height="16" viewBox="0 0 16 16"><g fill="none" stroke="#62b1f6" stroke-width="2.1" stroke-linecap="round" stroke-linejoin="round"><circle cx="13" cy="3" r="2"/><circle cx="3" cy="11" r="2"/><path d="M12 6.6 L11.4 7.2 H9.4 C7.3 7.2 7.3 11 9.4 11 H12.6 C15.3 11 15.3 15 12.6 15 H5.8"/></g><path d="M0.9 11.8 L3 16 L5.1 11.8 Z" fill="#62b1f6"/><path d="M10.9 4.2 L12.4 7.6 L15 4.6 Z" fill="#62b1f6"/></svg></div>
<div class="cell" style="left:296px;top:347px;width:109px">
<div class="t" style="left:5px;top:7px;color:#262626;font-weight:bold;transform:scaleX(0.9232);">TestDriveLLC</div>
<div class="t" style="left:86.5px;top:7px;color:#262626;transform:scaleX(1.0160);">(Test</div>
</div>
<div class="t" style="left:412px;top:355px;color:#262626;transform:scaleX(1.0094);">07/31/23 0800 - 08/01/23 2359 Appt set</div>
<div class="sw" style="left:637px;top:355px;background:#4169e1"></div>
<div class="t" style="left:655px;top:355px;color:#262626;transform:scaleX(0.9616);">Zone7</div>
<div class="t" style="left:757px;top:354px;color:#262626;transform:scaleX(1.0045);">: Houston Distributing Co</div>
<div class="a" style="left:900.5px;top:354px;width:16px;height:16px"><svg width="16" height="16" viewBox="0 0 16 16"><g fill="#62b1f6"><path d="M0 16 L1.3 10.5 L9.2 2.6 L13.4 6.8 L5.5 14.7 Z"/><path d="M10.1 1.7 L11.2 0.6 C12.2 -0.4 13.5 -0.3 14.6 0.8 L15.2 1.4 C16.3 2.5 16.4 3.8 15.4 4.8 L14.3 5.9 Z"/></g></svg></div>
<div class="t" style="left:937px;top:355px;color:#262626;">: Houston Distributing Company</div>

<div class="t" style="left:1277px;top:355px;color:#262626;transform:scaleX(0.9664);">7100 High Life Drive</div>
<div class="t" style="left:1517px;top:355px;color:#262626;transform:scaleX(0.9717);">Houston</div>
<div class="t" style="left:1642px;top:355px;color:#262626;transform:scaleX(0.8790);">TX</div>
<div class="t" style="left:1717px;top:355px;color:#262626;transform:scaleX(0.8916);">USA</div>
<div class="sw" style="left:1805px;top:355px;background:#d2691e"></div>
<div class="t" style="left:1823px;top:355px;color:#262626;transform:scaleX(0.9632);">Zone</div>
</div>
<svg class="a" style="left:0;top:0" width="1861" height="653" viewBox="0 0 1861 653">
<defs><filter id="sh" x="-20%" y="-20%" width="140%" height="160%"><feGaussianBlur in="SourceAlpha" stdDeviation="2"/><feOffset dx="1" dy="3"/><feComponentTransfer><feFuncA type="linear" slope="0.45"/></feComponentTransfer><feMerge><feMergeNode/><feMergeNode in="SourceGraphic"/></feMerge></filter></defs>
<g filter="url(#sh)" fill="#e54f3b">
<rect x="1596" y="36" width="155" height="66" rx="5"/>
<path d="M1738 102 L1751 96 L1795.5 114.7 L1795.5 104 L1817 129 L1784.5 131 L1791.4 125 Z"/>
<path d="M1812.5 133.5 H1861 V165.5 H1812.5 Z" fill="none" stroke="#e54f3b" stroke-width="3"/>
</g>
</svg>
<div class="a" style="left:1603px;top:58px;font-size:19.6px;line-height:21px;color:#fff;white-space:nowrap;transform:scaleX(0.979);transform-origin:0 0">Column chooser</div>
<svg class="a" style="left:1828px;top:141px" width="16" height="14" viewBox="0 0 16 14"><rect x="1" y="1" width="14" height="12" rx="1.5" fill="none" stroke="#fff" stroke-width="2"/><rect x="1" y="1" width="14" height="3" fill="#fff"/><rect x="7.2" y="1" width="1.6" height="12" fill="#fff"/></svg>
</body></html>
